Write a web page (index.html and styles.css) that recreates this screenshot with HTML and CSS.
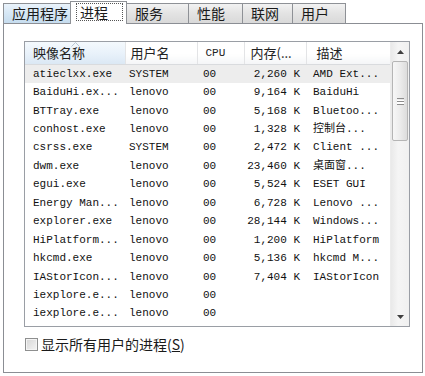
FILE: index.html
```html
<!DOCTYPE html>
<html lang="zh-CN">
<head>
  <meta charset="UTF-8" />
  <title>任务管理器 - 进程</title>
  <link rel="stylesheet" href="styles.css">
</head>
<body>
  <!-- Pestañas -->
  <div class="tabs">
    <div class="tab tab-hover" style="width: 68px">应用程序</div>
    <div class="tab tab-active" style="width: 57px"><span class="focus">进程</span></div>
    <div class="tab" style="width: 63px">服务</div>
    <div class="tab" style="width: 55px">性能</div>
    <div class="tab" style="width: 51px">联网</div>
    <div class="tab" style="width: 54px">用户</div>
  </div>

  <div class="panel">
    <div class="listview">
      <div class="list">
        <table>
          <colgroup>
            <col style="width: 100px">
            <col style="width: 72px">
            <col style="width: 47px">
            <col style="width: 62px">
            <col>
          </colgroup>
          <thead>
            <tr>
              <th class="sorted c-name">
                <svg class="sort-mark" width="9" height="5" viewBox="0 0 9 5"><path d="M0.5 4.5 L4.5 0.5 L8.5 4.5" fill="none" stroke="#b9c6d3" stroke-width="1"/></svg>
                映像名称
              </th>
              <th class="c-user">用户名</th>
              <th class="c-cpu">CPU</th>
              <th class="c-mem">内存(...</th>
              <th class="c-desc">描述</th>
            </tr>
          </thead>
          <tbody id="rows"></tbody>
        </table>
      </div>
      <div class="scrollbar">
        <div class="sb-btn">
          <svg width="7" height="4" viewBox="0 0 7 4"><path d="M0 4 L3.5 0 L7 4 Z" fill="#3f3f3f"/></svg>
        </div>
        <div class="sb-thumb">
          <span class="grip"></span>
        </div>
        <div class="sb-track"></div>
        <div class="sb-btn">
          <svg width="7" height="4" viewBox="0 0 7 4"><path d="M0 0 L3.5 4 L7 0 Z" fill="#3f3f3f"/></svg>
        </div>
      </div>
    </div>

    <label class="showall">
      <span class="check"></span>
      <span>显示所有用户的进程(<u>S</u>)</span>
    </label>
  </div>

  <script>
    // Lista de procesos
    const procesos = [
      ['atieclxx.exe', 'SYSTEM', '00', '2,260 K', 'AMD Ext...'],
      ['BaiduHi.ex...', 'lenovo', '00', '9,164 K', 'BaiduHi'],
      ['BTTray.exe', 'lenovo', '00', '5,168 K', 'Bluetoo...'],
      ['conhost.exe', 'lenovo', '00', '1,328 K', '控制台...'],
      ['csrss.exe', 'SYSTEM', '00', '2,472 K', 'Client ...'],
      ['dwm.exe', 'lenovo', '00', '23,460 K', '桌面窗...'],
      ['egui.exe', 'lenovo', '00', '5,524 K', 'ESET GUI'],
      ['Energy Man...', 'lenovo', '00', '6,728 K', 'Lenovo ...'],
      ['explorer.exe', 'lenovo', '00', '28,144 K', 'Windows...'],
      ['HiPlatform...', 'lenovo', '00', '1,200 K', 'HiPlatform'],
      ['hkcmd.exe', 'lenovo', '00', '5,136 K', 'hkcmd M...'],
      ['IAStorIcon...', 'lenovo', '00', '7,404 K', 'IAStorIcon'],
      ['iexplore.e...', 'lenovo', '00', '', ''],
      ['iexplore.e...', 'lenovo', '00', '', ''],
      ['iexplore.e...', 'lenovo', '00', '', '']
    ];

    const tbody = document.getElementById('rows');
    procesos.forEach((p, i) => {
      const tr = document.createElement('tr');
      if (i === 0) tr.className = 'selected';
      p.forEach((val, j) => {
        const td = document.createElement('td');
        td.textContent = val;
        td.className = ['c-name', 'c-user', 'c-cpu', 'c-mem', 'c-desc'][j];
        tr.appendChild(td);
      });
      tbody.appendChild(tr);
    });
  </script>
</body>
</html>
```

FILE: styles.css
```css
/* ===== General ===== */
body {
  margin: 0;
  background-color: #fff;
  color: #1a1a1a;
  font-family: "Noto Sans CJK SC", "Liberation Sans", sans-serif;
}

/* ===== Pestañas ===== */
.tabs {
  display: flex;
  align-items: flex-end;
  height: 23px;
  padding-left: 3px;
  box-sizing: border-box;
}
.tab {
  position: relative;
  height: 20px;
  box-sizing: border-box;
  margin-right: -1px;
  padding-left: 8px;
  border: 1px solid #8e9196;
  border-bottom: none;
  background: linear-gradient(#f2f2f2, #e3e3e3 50%, #d9d9d9);
  font-size: 14px;
  line-height: 18px;
  color: #1a1a1a;
}
.tab-hover {
  background: linear-gradient(#eaf3fb, #d6e7f5 50%, #c6dcee);
}
.tab-active {
  z-index: 1;
  height: 23px;
  margin-bottom: -1px;
  padding-left: 5px;
  background: #fff;
}
.focus {
  display: inline-block;
  margin-top: 1px;
  padding: 0 14px 0 3px;
  line-height: 16px;
  border: 1px dotted #555;
}

/* ===== Panel ===== */
.panel {
  width: 420px;
  height: 350px;
  margin-left: 3px;
  padding: 17px 12px 0 20px;
  box-sizing: border-box;
  border: 1px solid #8b8e94;
  background-color: #fff;
}

/* ===== Lista de procesos ===== */
.listview {
  display: flex;
  height: 286px;
  border: 1px solid #9a9ea5;
  box-sizing: border-box;
}
.list {
  flex: 1;
  overflow: hidden;
}
table {
  width: 100%;
  table-layout: fixed;
  border-collapse: collapse;
}
th {
  height: 22px;
  padding: 0;
  box-sizing: border-box;
  border-right: 1px solid #e3e4e6;
  border-bottom: 1px solid #d9dbde;
  background: linear-gradient(#fff, #fff 55%, #f4f5f7);
  font-weight: normal;
  font-size: 13px;
  line-height: 20px;
  text-align: left;
  color: #222;
  white-space: nowrap;
}
th.sorted {
  position: relative;
  background: linear-gradient(#f4f9fd, #e8f1fa 55%, #dbe8f4);
}
.sort-mark {
  position: absolute;
  left: 46px;
  top: 0;
}
th.c-name { padding-left: 8px; }
th.c-user { padding-left: 5px; }
th.c-cpu { padding-left: 8px; font-family: "Liberation Mono", monospace; font-size: 11px; }
th.c-mem { padding-left: 6px; }
th.c-desc { padding-left: 10px; border-right: none; }

td {
  height: 18.45px;
  padding: 0;
  font-family: "Liberation Mono", "Noto Sans CJK SC", monospace;
  font-size: 11px;
  line-height: 18px;
  color: #111;
  white-space: nowrap;
  overflow: hidden;
}
td.c-name { padding-left: 8px; }
td.c-user { padding-left: 4px; }
td.c-cpu { padding-left: 6px; }
td.c-mem { padding-right: 6px; text-align: right; }
td.c-desc { padding-left: 7px; }
tr.selected td {
  background-color: #ededed;
}

/* ===== Barra de desplazamiento ===== */
.scrollbar {
  display: flex;
  flex-direction: column;
  width: 18px;
  background: linear-gradient(90deg, #e9e9e9, #f5f5f5 40%, #f0f0f0);
  border-left: 1px solid #ececec;
}
.sb-btn {
  display: flex;
  align-items: center;
  justify-content: center;
  height: 19px;
}
.sb-thumb {
  display: flex;
  align-items: center;
  justify-content: center;
  height: 80px;
  margin: 0 1px;
  border: 1px solid #b5b5b5;
  border-radius: 2px;
  box-sizing: border-box;
  background: linear-gradient(90deg, #f7f7f7, #ececec 50%, #dcdcdc);
}
.grip {
  width: 7px;
  height: 5px;
  border-top: 1px solid #8c8c8c;
  border-bottom: 1px solid #8c8c8c;
  background: linear-gradient(#fff 1px, #8c8c8c 1px, #8c8c8c 2px, #fff 2px, #fff 3px);
  background-size: 7px 5px;
  background-position: 0 1px;
  background-repeat: no-repeat;
}
.sb-track {
  flex: 1;
}

/* ===== Casilla ===== */
.showall {
  display: flex;
  align-items: center;
  gap: 3px;
  margin-top: 9px;
  margin-left: 1px;
  font-size: 14px;
  line-height: 16px;
  color: #1a1a1a;
}
.check {
  width: 13px;
  height: 13px;
  box-sizing: border-box;
  border: 1px solid #8e8f8f;
  background: linear-gradient(135deg, #d6d6d6, #f4f4f4);
  box-shadow: inset 0 0 0 1px #f4f4f4;
}
.showall u {
  text-decoration: underline;
}
```
